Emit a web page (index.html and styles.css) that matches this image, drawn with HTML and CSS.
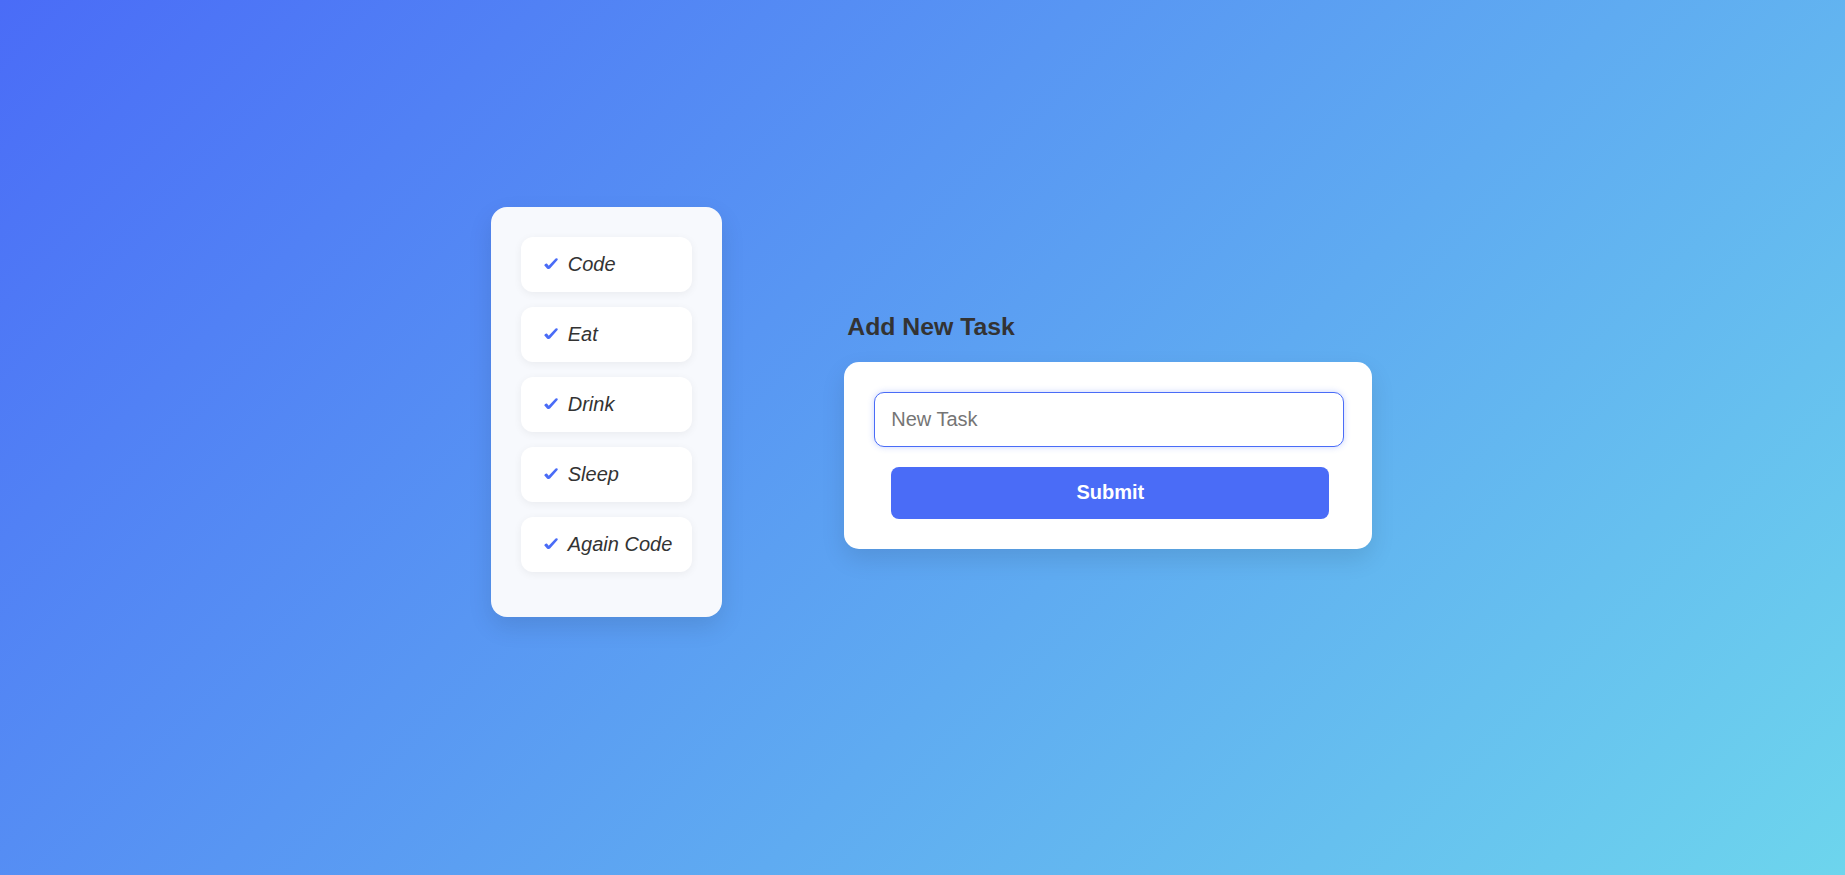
FILE: index.html
```html
<!DOCTYPE html>
<html lang="en">
<head>
<meta charset="utf-8">
<title>Tasks</title>
<link rel="stylesheet" href="styles.css">
</head>
<body>
<div class="app">
  <div class="task-card">
    <div class="task"><svg class="check" viewBox="0 0 14 11" width="14" height="11"><path d="M0.2 7.3 Q1.0 5.2 2.9 5.5 L4.7 7.7 L11.6 0.4 Q13.7 -0.3 13.8 1.7 L6.0 10.4 Q4.2 11.8 3.0 10.4 Z"/></svg><span class="label">Code</span></div>
    <div class="task"><svg class="check" viewBox="0 0 14 11" width="14" height="11"><path d="M0.2 7.3 Q1.0 5.2 2.9 5.5 L4.7 7.7 L11.6 0.4 Q13.7 -0.3 13.8 1.7 L6.0 10.4 Q4.2 11.8 3.0 10.4 Z"/></svg><span class="label">Eat</span></div>
    <div class="task"><svg class="check" viewBox="0 0 14 11" width="14" height="11"><path d="M0.2 7.3 Q1.0 5.2 2.9 5.5 L4.7 7.7 L11.6 0.4 Q13.7 -0.3 13.8 1.7 L6.0 10.4 Q4.2 11.8 3.0 10.4 Z"/></svg><span class="label">Drink</span></div>
    <div class="task"><svg class="check" viewBox="0 0 14 11" width="14" height="11"><path d="M0.2 7.3 Q1.0 5.2 2.9 5.5 L4.7 7.7 L11.6 0.4 Q13.7 -0.3 13.8 1.7 L6.0 10.4 Q4.2 11.8 3.0 10.4 Z"/></svg><span class="label">Sleep</span></div>
    <div class="task"><svg class="check" viewBox="0 0 14 11" width="14" height="11"><path d="M0.2 7.3 Q1.0 5.2 2.9 5.5 L4.7 7.7 L11.6 0.4 Q13.7 -0.3 13.8 1.7 L6.0 10.4 Q4.2 11.8 3.0 10.4 Z"/></svg><span class="label">Again Code</span></div>
  </div>
  <div class="add-group">
    <h2 class="add-title">Add New Task</h2>
    <form class="add-card">
      <input class="task-input" type="text" placeholder="New Task" autofocus>
      <button class="submit-btn" type="button">Submit</button>
    </form>
  </div>
</div>
</body>
</html>
```

FILE: styles.css
```css
* { box-sizing: border-box; }
html, body { height: 100%; }
body {
  margin: 0;
  font-family: "Liberation Sans", Arial, sans-serif;
  color: #333;
  background: linear-gradient(135deg, #4a6cf7 0%, #6dd5ed 100%);
  display: flex;
  justify-content: center;
  align-items: center;
}
.app {
  display: flex;
  align-items: flex-start;
  gap: 122px;
  padding-left: 18px;
  padding-bottom: 52px;
}
.task-card {
  background: #f7f9fd;
  border-radius: 16px;
  padding: 30px;
  box-shadow: 0 10px 25px rgba(0, 0, 0, 0.1);
  display: flex;
  flex-direction: column;
}
.task {
  background: #fff;
  border-radius: 12px;
  height: 55px;
  padding: 16px 20px 16px 23px;
  margin-bottom: 15px;
  font-size: 20px;
  font-style: italic;
  line-height: 23px;
  box-shadow: 0 2px 8px rgba(0, 0, 0, 0.06);
  white-space: nowrap;
  display: flex;
  align-items: baseline;
}
.check {
  flex: none;
  width: 14px;
  height: 11px;
  margin-right: 10px;
  align-self: flex-start;
  margin-top: 5px;
  fill: #4a6cf7;
}
.add-group {
  margin-top: 106px;
  display: flex;
  flex-direction: column;
}
.add-title {
  margin: 0 0 21px 3px;
  font-size: 24.8px;
  font-weight: bold;
  line-height: 28px;
  color: #333;
}
.add-card {
  width: 528px;
  background: #fff;
  border-radius: 15px;
  padding: 30px;
  box-shadow: 0 10px 25px rgba(0, 0, 0, 0.1);
  display: flex;
  flex-direction: column;
  margin: 0;
}
.task-input {
  width: calc(100% + 2px);
  height: 55px;
  padding: 0 15px 0 16px;
  font-family: "Liberation Sans", Arial, sans-serif;
  font-size: 20px;
  color: #333;
  border: 1px solid #4a6cf7;
  border-radius: 10px;
  outline: none;
  box-shadow: 0 0 6px rgba(74, 108, 247, 0.3);
  margin-bottom: 20px;
}
.task-input::placeholder { color: #757575; }
.submit-btn {
  margin: 0 13px 0 17px;
  height: 52px;
  background: #4a6cf7;
  color: #fff;
  border: none;
  border-radius: 8px;
  font-family: "Liberation Sans", Arial, sans-serif;
  font-size: 20px;
  font-weight: bold;
  cursor: pointer;
}
```
